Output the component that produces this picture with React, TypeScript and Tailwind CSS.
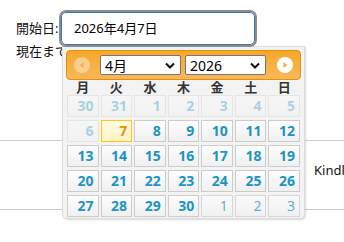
import React from "react";

const weekdays = ["月", "火", "水", "木", "金", "土", "日"];

type Day = { n: number; kind: "off" | "cur" | "today" | "next" };

const weeks: Day[][] = [
  [
    { n: 30, kind: "off" },
    { n: 31, kind: "off" },
    { n: 1, kind: "off" },
    { n: 2, kind: "off" },
    { n: 3, kind: "off" },
    { n: 4, kind: "off" },
    { n: 5, kind: "off" },
  ],
  [
    { n: 6, kind: "off" },
    { n: 7, kind: "today" },
    { n: 8, kind: "cur" },
    { n: 9, kind: "cur" },
    { n: 10, kind: "cur" },
    { n: 11, kind: "cur" },
    { n: 12, kind: "cur" },
  ],
  [13, 14, 15, 16, 17, 18, 19].map((n) => ({ n, kind: "cur" as const })),
  [20, 21, 22, 23, 24, 25, 26].map((n) => ({ n, kind: "cur" as const })),
  [
    { n: 27, kind: "cur" },
    { n: 28, kind: "cur" },
    { n: 29, kind: "cur" },
    { n: 30, kind: "cur" },
    { n: 1, kind: "next" },
    { n: 2, kind: "next" },
    { n: 3, kind: "next" },
  ],
];

function DayCell({ day }: { day: Day }) {
  let cls =
    "h-[22px] border border-[#cccccc] bg-gradient-to-b from-[#fdfdfd] to-[#f0f0f0] text-[#1c94c4] font-bold";
  if (day.kind === "off") cls += " opacity-35";
  if (day.kind === "next") cls += " opacity-70 !font-normal";
  if (day.kind === "today")
    cls =
      "h-[22px] border border-[#fbcb09] bg-gradient-to-b from-[#fffbe8] to-[#fdf1c2] text-[#eb8f00] font-bold";
  return (
    <div className={`${cls} flex items-center justify-end pr-[4px] text-[14px] leading-none`}>
      {day.n}
    </div>
  );
}

function Select({ value, width }: { value: string; width: string }) {
  return (
    <div
      className={`${width} h-[20px] bg-white border border-[#767676] rounded-[2px] flex items-center justify-between pl-[4px] pr-[5px] text-[14px] text-black`}
    >
      <span>{value}</span>
      <svg width="10" height="7" viewBox="0 0 10 7">
        <path d="M1 1.5 L5 5.5 L9 1.5" fill="none" stroke="#111" strokeWidth="2" />
      </svg>
    </div>
  );
}

export default function App() {
  return (
    <div
      className="relative w-[344px] h-[242px] overflow-hidden bg-white text-[#111]"
      style={{ fontFamily: '"Noto Sans", "Noto Sans CJK JP", sans-serif' }}
    >
      <div className="pl-4 pt-[10px]">
        <div className="flex items-center h-[37px]">
          <span className="text-[13px] w-[43px]">開始日:</span>
          <div className="relative z-10 w-[198px] h-[37px] rounded-[7px] border-2 border-[#8c8c8c] bg-white">
            <div className="h-full rounded-[5px] border border-[#3b73b9] flex items-center pl-[12px] text-[13px] text-black">
              2026年4月7日
            </div>
          </div>
        </div>
        <div className="-mt-[4px] text-[13px] leading-[16px] whitespace-nowrap">現在までの期間</div>
      </div>

      <div className="mt-[81px] border-t border-[#cccccc] h-[69px] flex pt-[20px] pl-[314px]">
        <span className="text-[13px] whitespace-nowrap">Kindle</span>
      </div>
      <div className="border-t border-[#cccccc]" />

      <div className="absolute left-[62px] top-[46px] w-[243px] h-[173px] bg-[#f3f3f3] border border-[#dddddd] rounded-b-[5px] shadow-[1px_1px_2px_rgba(0,0,0,0.15)] p-[3px]">
        <div className="h-[30px] rounded-[4px] border border-[#e78f08] bg-gradient-to-b from-[#f6a828] to-[#f8b858] flex items-center px-[7px]">
          <div className="w-[16px] h-[16px] rounded-full bg-white/40 flex items-center justify-center">
            <svg width="8" height="8" viewBox="0 0 8 8">
              <path d="M5.5 1 L2 4 L5.5 7 Z" fill="#f6b04a" />
            </svg>
          </div>
          <div className="ml-[10px] flex gap-[4px]">
            <Select value="4月" width="w-[81px]" />
            <Select value="2026" width="w-[81px]" />
          </div>
          <div className="ml-[11px] w-[16px] h-[16px] rounded-full bg-white flex items-center justify-center">
            <svg width="8" height="8" viewBox="0 0 8 8">
              <path d="M2.5 1 L6 4 L2.5 7 Z" fill="#f6a828" />
            </svg>
          </div>
        </div>

        <div className="grid grid-cols-7 gap-x-[2px] px-[1px] h-[15px] items-center text-[13px] font-bold text-[#333] leading-none">
          {weekdays.map((w) => (
            <div key={w} className="text-center">
              {w}
            </div>
          ))}
        </div>

        <div className="grid grid-cols-7 gap-x-[2px] gap-y-[3px] px-[1px]">
          {weeks.map((week, i) =>
            week.map((d, j) => <DayCell key={`${i}-${j}`} day={d} />)
          )}
        </div>
      </div>
    </div>
  );
}
